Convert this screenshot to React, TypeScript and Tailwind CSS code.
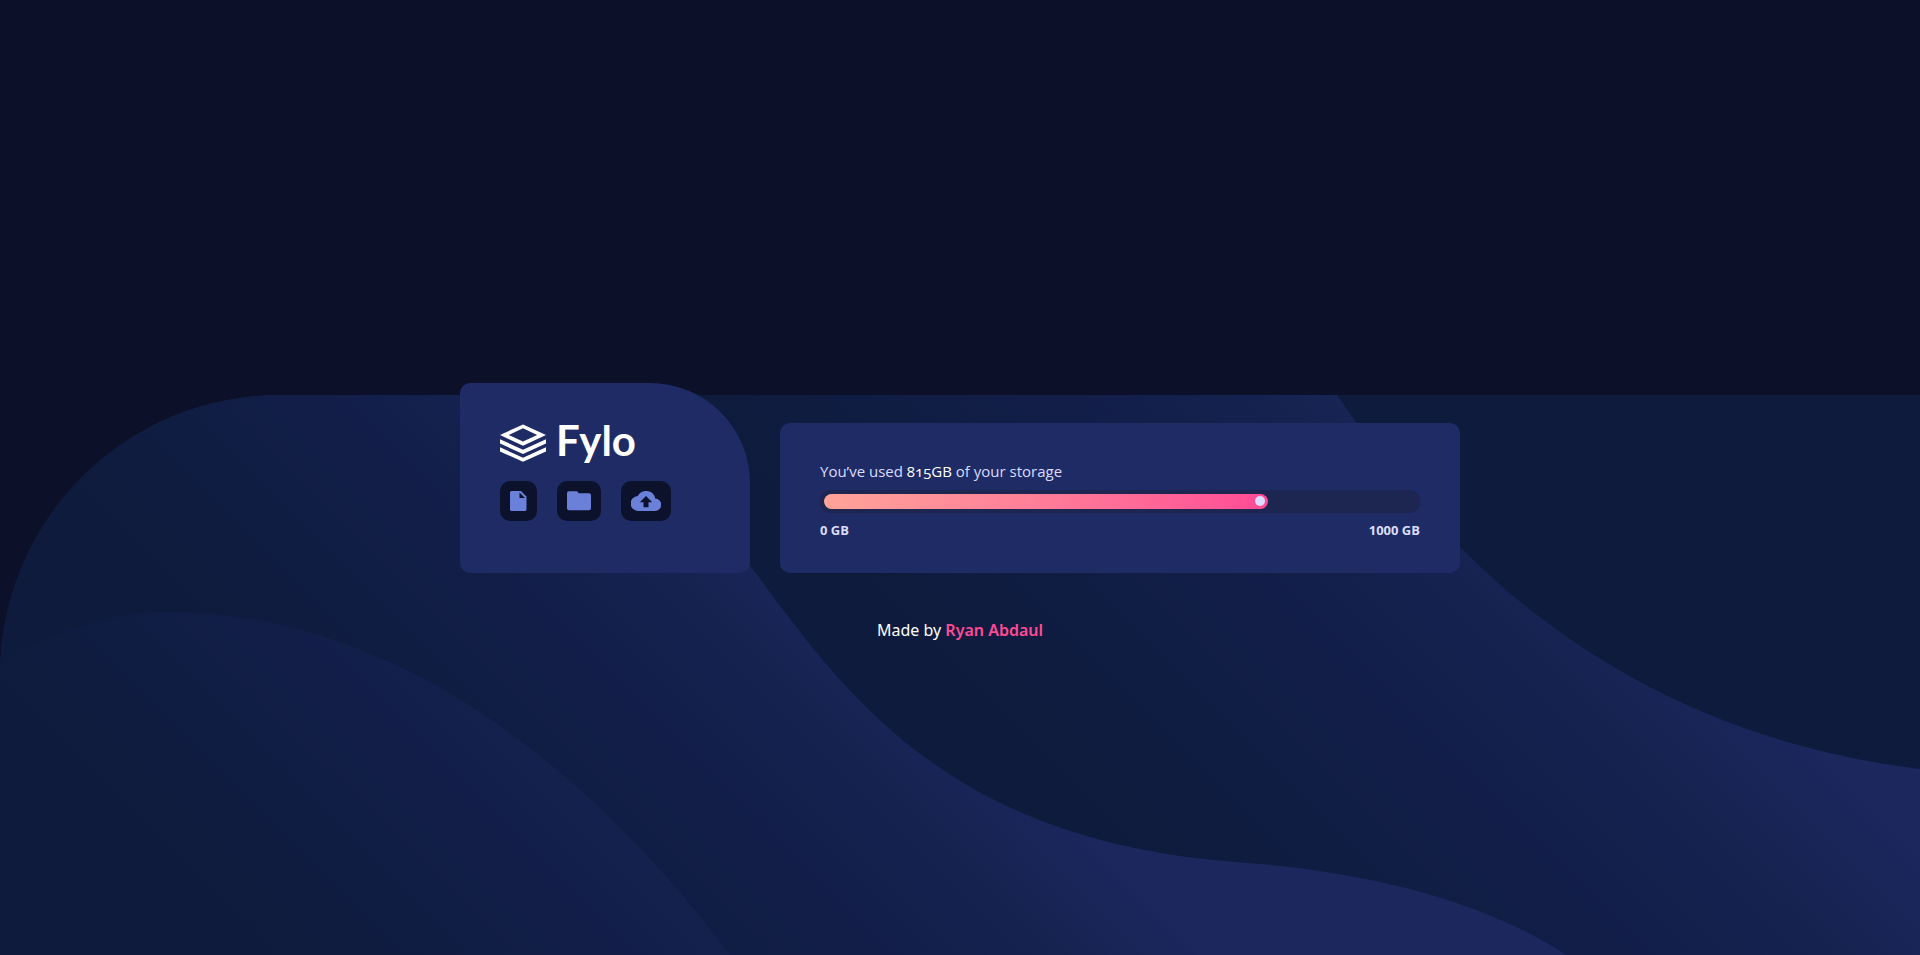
import React from 'react';

const gradients = [
  { id: 'wave-right', x1: 660, y1: 0, x2: 1060, y2: -400 },
  { id: 'wave-middle', x1: -30, y1: 0, x2: 310, y2: -340 },
  { id: 'wave-left', x1: -300, y1: 0, x2: 50, y2: -350 },
];

function Waves() {
  return (
    <svg
      aria-hidden="true"
      viewBox="0 0 1920 560"
      preserveAspectRatio="xMidYMax slice"
      className="absolute inset-x-0 bottom-0 -z-10 w-full"
    >
      <defs>
        {gradients.map((g) => (
          <linearGradient key={g.id} gradientUnits="userSpaceOnUse" {...g}>
            <stop offset="0" stopColor="#0e1b3c" />
            <stop offset="0.5" stopColor="#121e48" />
            <stop offset="0.75" stopColor="#15224f" />
            <stop offset="1" stopColor="#1b275d" />
          </linearGradient>
        ))}
        <clipPath id="panel">
          <path d="M0 280A280 280 0 0 1 280 0H1920V560H0Z" />
        </clipPath>
      </defs>
      <g clipPath="url(#panel)">
        <rect width="1920" height="560" fill="#0e1b3c" />
        <path d="M0 0H1337C1400 90 1560 330 1920 374V560H0Z" fill="url(#wave-right)" />
        <path
          d="M0 0H640L751 172C840 290 940 445 1235 467C1380 477 1490 510 1566 560H0Z"
          fill="url(#wave-middle)"
        />
        <path d="M0 267C60 235 110 217 167 217C400 217 595 380 730 560H0Z" fill="url(#wave-left)" />
      </g>
    </svg>
  );
}

function Logo() {
  return (
    <h1 className="flex h-10 items-center gap-[10px] text-white">
      <svg aria-hidden="true" width="46" height="38" viewBox="0 0 46 38" fill="currentColor">
        <path fillRule="evenodd" d="M23 .500 46 11 23 21.700 0 11ZM23 4.300 8.800 11 23 17.500 37.200 11Z" />
        <path d="M0 15.300 23 25.700 46 15.300V19.600L23 30 0 19.600Z" />
        <path d="M0 23.300 23 33.700 46 23.300V27.400L23 37.800 0 27.400Z" />
      </svg>
      <span className="pb-[6px] font-[Lato,sans-serif] text-[42px] leading-10 font-bold">Fylo</span>
    </h1>
  );
}

const tile = 'flex h-10 items-center rounded-[10px] bg-[#0c122c] px-[10px] text-[#6b80d8]';

function Actions() {
  return (
    <div className="mt-[18px] flex gap-5">
      <button type="button" aria-label="Documents" className={tile}>
        <svg width="17" height="20" viewBox="0 0 17 20" fill="currentColor">
          <path
            fillRule="evenodd"
            d="M1.500 0H11L16.500 5.500V18.500Q16.500 20 15 20H1.500Q0 20 0 18.500V1.500Q0 0 1.500 0ZM9.500 1.500V7H15Z"
          />
        </svg>
      </button>
      <button type="button" aria-label="Folders" className={tile}>
        <svg width="24" height="20" viewBox="0 0 24 20" fill="currentColor">
          <path d="M2 .300H9.500Q10.500 .300 11 1.300L11.700 2.300H22Q24 2.300 24 4.300V17.300Q24 19.300 22 19.300H2Q0 19.300 0 17.300V2.300Q0 .300 2 .300Z" />
        </svg>
      </button>
      <button type="button" aria-label="Upload" className={tile}>
        <svg width="30" height="20" viewBox="0 0 30 20" fill="currentColor">
          <path
            fillRule="evenodd"
            d="M24.200 7.500A9.400 9.400 0 0 0 6.700 5A7.500 7.500 0 0 0 7.500 20H23.800A6.200 6.200 0 0 0 24.200 7.500ZM17.500 11.200V16.200H12.500V11.200H8.800L15 5L21.200 11.200Z"
          />
        </svg>
      </button>
    </div>
  );
}

export default function App() {
  return (
    <main className="relative isolate grid min-h-screen grid-rows-[1fr_auto_1fr] justify-items-center overflow-hidden bg-[#0c1029] font-['Open_Sans',sans-serif]">
      <Waves />
      <div className="row-start-2 flex w-full max-w-[1000px] items-end gap-[30px]">
        <section className="h-[190px] w-[290px] rounded-[10px] rounded-tr-[100px] bg-[#1e2b65] p-10">
          <Logo />
          <Actions />
        </section>
        <section className="h-[150px] flex-1 rounded-[10px] bg-[#1e2b65] px-10 pt-[38px] text-[#dcdcff]">
          <p className="text-[15px] leading-5">
            You’ve used{' '}
            <span className="font-medium text-white [font-variant-numeric:oldstyle-nums]">815GB</span> of your storage
          </p>
          <div
            role="progressbar"
            aria-label="Storage used"
            aria-valuenow={815}
            aria-valuemin={0}
            aria-valuemax={1000}
            className="mt-[9px] h-[23px] rounded-[10px] bg-[#1c2650] p-1"
          >
            <div className="flex h-[15px] w-3/4 items-center justify-end rounded-[10px] bg-linear-to-r from-[#ffa399] to-[#ff4a96] pr-[3px]">
              <span className="size-[10px] rounded-full bg-[#dcdcff]" />
            </div>
          </div>
          <div className="mt-[7px] flex justify-between text-[13px] leading-5 font-bold">
            <span>0 GB</span>
            <span>1000 GB</span>
          </div>
        </section>
      </div>
      <footer className="row-start-3 mt-[45px] font-['Noto_Sans',sans-serif] text-base text-white">
        Made by{' '}
        <a href="#" className="font-semibold text-[#ff4a96]">
          Ryan Abdaul
        </a>
      </footer>
    </main>
  );
}
